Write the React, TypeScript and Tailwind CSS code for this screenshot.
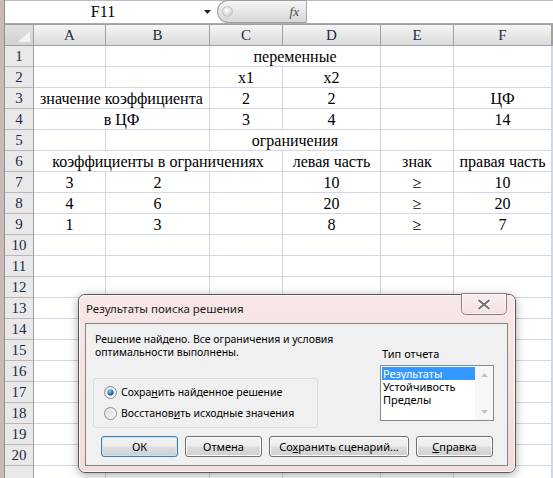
import React from "react";

type Cell = { span?: number; t?: string };
const E: Cell = {};

const rowsData: Cell[][] = [
  [E, E, { span: 2, t: "переменные" }, E, E, E],
  [E, E, { t: "x1" }, { t: "x2" }, E, E, E],
  [{ span: 2, t: "значение коэффициента" }, { t: "2" }, { t: "2" }, E, { t: "ЦФ" }, E],
  [{ span: 2, t: "в ЦФ" }, { t: "3" }, { t: "4" }, E, { t: "14" }, E],
  [E, E, { span: 2, t: "ограничения" }, E, E, E],
  [{ span: 3, t: "коэффициенты в ограничениях" }, { t: "левая часть" }, { t: "знак" }, { t: "правая часть" }, E],
  [{ t: "3" }, { t: "2" }, E, { t: "10" }, { t: "≥" }, { t: "10" }, E],
  [{ t: "4" }, { t: "6" }, E, { t: "20" }, { t: "≥" }, { t: "20" }, E],
  [{ t: "1" }, { t: "3" }, E, { t: "8" }, { t: "≥" }, { t: "7" }, E],
];
while (rowsData.length < 21) rowsData.push([E, E, E, E, E, E, E]);

const COLS = ["A", "B", "C", "D", "E", "F", ""];

function spanCls(s?: number) {
  if (s === 2) return "col-span-2";
  if (s === 3) return "col-span-3";
  return "";
}

function Radio({ checked }: { checked?: boolean }) {
  const gid = checked ? "rgc" : "rgu";
  return (
    <svg width="13" height="13" viewBox="0 0 13 13">
      <defs>
        <linearGradient id={gid} x1="0" y1="0" x2="1" y2="1">
          <stop offset="0" stopColor="#d6d6d6" />
          <stop offset="1" stopColor="#fbfbfb" />
        </linearGradient>
        <radialGradient id="dot" cx="0.4" cy="0.35" r="0.7">
          <stop offset="0" stopColor="#a9dcf7" />
          <stop offset="0.5" stopColor="#2c7fc0" />
          <stop offset="1" stopColor="#0d3f6e" />
        </radialGradient>
      </defs>
      <circle cx="6.5" cy="6.5" r="6" fill={`url(#${gid})`} stroke="#8c8f91" />
      <circle cx="6.5" cy="6.5" r="4.5" fill="none" stroke="#ffffff" strokeOpacity="0.6" />
      {checked && <circle cx="6.5" cy="6.5" r="3" fill="url(#dot)" />}
    </svg>
  );
}

function Btn({ children, w, def }: { children: React.ReactNode; w: string; def?: boolean }) {
  return (
    <div
      className={`${w} h-[21px] flex items-center justify-center rounded-[3px] border ${
        def
          ? "border-[#3c7fb1] shadow-[inset_0_0_0_1px_#c4e5f6]"
          : "border-[#707070] shadow-[inset_0_0_0_1px_#fbfbfb]"
      } bg-[linear-gradient(#f3f3f3,#ececec_48%,#dddddd_52%,#cfcfcf)] text-[11px] leading-[14px] text-black`}
    >
      {children}
    </div>
  );
}

export default function App() {
  return (
    <div className="relative w-[553px] h-[478px] overflow-hidden flex bg-white">
      {/* window frame strip */}
      <div className="w-[5px] h-full bg-[#c9bab9] border-r border-[#9a8c8c]" />
      <div className="flex-1 flex flex-col min-w-0">
        {/* toolbar bottom */}
        <div className="h-[5px] bg-[#dfe2e6] border-b border-[#b8bcc2]" />
        {/* formula bar */}
        <div className="h-[23px] flex bg-white border-b border-[#a7abb0]">
          <div className="w-[212px] flex items-center">
            <div className="w-[196px] text-center font-['Liberation_Serif',serif] text-[16px] leading-[20px] text-black">
              F11
            </div>
            <svg className="ml-[3px]" width="7" height="4" viewBox="0 0 7 4">
              <path d="M0 0h7L3.5 4z" fill="#202020" />
            </svg>
          </div>
          <div className="w-[90px] h-[23px] -mt-[1px] flex items-center justify-between rounded-l-full border border-[#9aa0a6] border-r-[#a7abb0] bg-[linear-gradient(#f6f6f6,#e6e6e6_50%,#d6d6d6)]">
            <div className="ml-[4px] w-[11px] h-[11px] rounded-full border border-[#c4c4c4] bg-[radial-gradient(circle_at_40%_35%,#ffffff,#d4d4d4_70%,#bdbdbd)]" />
            <span className="mr-[7px] font-['Liberation_Serif',serif] italic text-[13px] leading-[14px] text-[#4a4a4a]">
              fx
            </span>
          </div>
          <div className="flex-1" />
        </div>
        <div className="h-[3px] bg-[#e3e6ea]" />
        {/* sheet */}
        <div className="grid grid-cols-[29px_72px_104px_73px_98px_73px_98px_1fr] font-['Liberation_Serif',serif]">
          <div className="h-[22px] border-t border-b border-r border-[#9c9c9c] bg-[linear-gradient(#e1e1e1,#d3d3d3)] flex items-end justify-end pr-[3px] pb-[3px]">
            <svg width="12" height="11" viewBox="0 0 12 11">
              <path d="M12 0V11H0z" fill="#f4f4f4" />
            </svg>
          </div>
          {COLS.map((c, i) => (
            <div
              key={i}
              className="h-[22px] border-t border-b border-r border-[#a0a0a0] bg-[linear-gradient(#f4f4f4,#e8e8e8_50%,#dadada)] flex items-center justify-center text-[15px] leading-[20px] text-[#1d2a44]"
            >
              {c}
            </div>
          ))}
          {rowsData.map((row, r) => (
            <React.Fragment key={r}>
              <div className="h-[21px] border-b border-r border-b-[#b9b9b9] border-r-[#9c9c9c] bg-[#e9e9e9] flex items-center justify-center text-[15px] leading-[20px] text-[#1d2a44]">
                {r < 20 ? r + 1 : ""}
              </div>
              {row.map((cell, ci) => (
                <div
                  key={ci}
                  className={`${spanCls(cell.span)} h-[21px] border-b border-r border-[#d0d7e5] bg-white flex justify-center whitespace-nowrap text-[16px] leading-[18px] pt-[2px] text-black`}
                >
                  {cell.t}
                </div>
              ))}
            </React.Fragment>
          ))}
        </div>
      </div>

      {/* Solver results dialog */}
      <div className="absolute left-[78px] top-[294px] w-[438px] h-[179px] rounded-[7px] border border-[#5f5757] bg-[linear-gradient(#f7e7e6,#f2dcdb)] shadow-[0_2px_10px_rgba(0,0,0,0.35)] font-['Noto_Sans',sans-serif] text-[11px] text-black">
        <div className="relative h-full rounded-[6px] border border-white/70 flex flex-col">
          <div className="h-[27px] pl-[6px] pt-[6px] text-[11.5px] leading-[14px] text-[#1b1b1b]">Результаты поиска решения</div>
          <div className="absolute right-[7px] -top-[3px] w-[46px] h-[22px] rounded-b-[5px] border border-[#8b7f7f] bg-[linear-gradient(#f9eeee,#f1e0df)] shadow-[inset_0_0_0_1px_rgba(255,255,255,0.7)] flex items-center justify-center">
            <svg width="14" height="11" viewBox="0 0 14 11">
              <path d="M2 1.5L12 9.5M12 1.5L2 9.5" stroke="#ffffff" strokeWidth="4" strokeLinecap="round" />
              <path d="M2 1.5L12 9.5M12 1.5L2 9.5" stroke="#6f6f6f" strokeWidth="2" strokeLinecap="round" />
            </svg>
          </div>
          <div className="mx-[5px] w-[423px] h-[143px] border border-[#858585] bg-[#f0f0f0] flex flex-col">
            <div className="flex">
              <div className="w-[294px] pl-[7px]">
                <div className="pl-[2px] pt-[9px] whitespace-nowrap text-[10.5px]">
                  <div className="h-[13px] leading-[13px]">Решение найдено. Все ограничения и условия</div>
                  <div className="h-[13px] leading-[13px]">оптимальности выполнены.</div>
                </div>
                <div className="mt-[19px] w-[225px] h-[50px] rounded-[3px] border border-[#d5dfe5] pt-[3px] pl-[10px] text-[10.5px]">
                  <div className="h-[21px] flex items-center gap-[4px] whitespace-nowrap">
                    <Radio checked />
                    <span>
                      Сохра<span className="underline">н</span>ить найденное решение
                    </span>
                  </div>
                  <div className="h-[21px] flex items-center gap-[4px] whitespace-nowrap">
                    <Radio />
                    <span>
                      Восстанов<span className="underline">и</span>ть исходные значения
                    </span>
                  </div>
                </div>
              </div>
              <div className="w-[114px] pt-[23px]">
                <div className="h-[13px] leading-[13px] pl-[2px]">Тип отчета</div>
                <div className="mt-[5px] h-[56px] w-[114px] border border-[#828790] bg-white flex">
                  <div className="flex-1 pt-[1px] pl-[1px]">
                    <div className="h-[13px] leading-[13px] bg-[#3399ff] text-white pl-[1px]">Результаты</div>
                    <div className="h-[13px] leading-[13px] pl-[1px]">Устойчивость</div>
                    <div className="h-[13px] leading-[13px] pl-[1px]">Пределы</div>
                  </div>
                  <div className="w-[18px] bg-[#f7f7f7] flex flex-col justify-between">
                    <div className="h-[17px] flex items-center justify-center">
                      <svg width="7" height="4" viewBox="0 0 7 4">
                        <path d="M3.5 0L7 4H0z" fill="#c2c2c2" />
                      </svg>
                    </div>
                    <div className="h-[17px] flex items-center justify-center">
                      <svg width="7" height="4" viewBox="0 0 7 4">
                        <path d="M0 0h7L3.5 4z" fill="#c2c2c2" />
                      </svg>
                    </div>
                  </div>
                </div>
              </div>
            </div>
            <div className="mt-[8px] pl-[15px] flex gap-[7px]">
              <Btn w="w-[77px]" def>
                ОК
              </Btn>
              <Btn w="w-[77px]">Отмена</Btn>
              <Btn w="w-[140px]">
                <span>
                  Со<span className="underline">х</span>ранить сценарий...
                </span>
              </Btn>
              <Btn w="w-[77px]">
                <span>
                  <span className="underline">С</span>правка
                </span>
              </Btn>
            </div>
          </div>
        </div>
      </div>
    </div>
  );
}
